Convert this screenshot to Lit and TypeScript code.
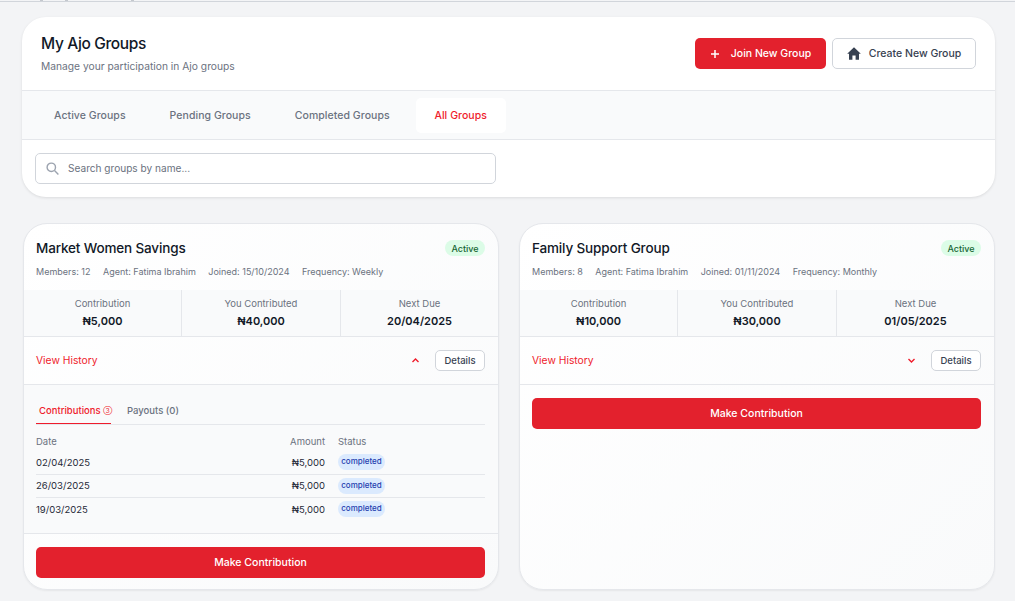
import { LitElement, html, css, nothing } from 'lit';
import { customElement } from 'lit/decorators.js';

interface Group {
  name: string;
  members: number;
  joined: string;
  frequency: string;
  contribution: string;
  contributed: string;
  nextDue: string;
  open: boolean;
}

const groups: Group[] = [
  { name: 'Market Women Savings', members: 12, joined: '15/10/2024', frequency: 'Weekly', contribution: '₦5,000', contributed: '₦40,000', nextDue: '20/04/2025', open: true },
  { name: 'Family Support Group', members: 8, joined: '01/11/2024', frequency: 'Monthly', contribution: '₦10,000', contributed: '₦30,000', nextDue: '01/05/2025', open: false },
];

const history = [
  { date: '02/04/2025', amount: '₦5,000' },
  { date: '26/03/2025', amount: '₦5,000' },
  { date: '19/03/2025', amount: '₦5,000' },
];

@customElement('app-root')
export class AppRoot extends LitElement {
  static styles = css`
    :host {
      display: block;
      height: 601px;
      overflow: hidden;
      background: #f3f4f6;
      font-family: Inter, 'Noto Sans', sans-serif;
      color: #111827;
    }
    /* bottoms of the letters of the page above, scrolled almost out of view */
    .topline {
      height: 1px;
      padding-left: 40px;
      display: flex;
      border-bottom: 1px solid #d1d5db;
    }
    .topline i {
      width: 3px;
      height: 1px;
      background: #c4c8ce;
    }
    .topline i + i {
      margin-left: 22px;
    }
    .topline i + i + i {
      margin-left: 63px;
    }
    .page {
      padding: 15px 20px 0 22px;
    }
    .panel {
      background: #fff;
      border-radius: 24px;
      box-shadow: 0 1px 3px rgba(0, 0, 0, 0.1);
      overflow: hidden;
    }
    .panel-head {
      height: 74px;
      box-sizing: border-box;
      padding: 0 19px 1px;
      display: flex;
      align-items: center;
      justify-content: space-between;
      border-bottom: 1px solid #e5e7eb;
    }
    h1 {
      margin: 0 0 4px;
      font-size: 15.5px;
      line-height: 22px;
      font-weight: 500;
      letter-spacing: -0.35px;
    }
    .sub {
      margin: 0;
      font-size: 10.25px;
      line-height: 14px;
      color: #6b7280;
    }
    .actions {
      display: flex;
      gap: 6px;
      margin-top: 1px;
    }
    .btn {
      height: 31px;
      box-sizing: border-box;
      border-radius: 5px;
      display: flex;
      align-items: center;
      justify-content: center;
      font: inherit;
      font-size: 10.5px;
      font-weight: 500;
    }
    .btn-red {
      width: 131px;
      gap: 11px;
      border: 0;
      background: #e3212d;
      color: #fff;
    }
    .btn-line {
      width: 144px;
      gap: 8px;
      border: 1px solid #d1d5db;
      background: #fff;
      color: #374151;
    }
    .tabs {
      height: 49px;
      box-sizing: border-box;
      padding: 7px 10px 0;
      display: flex;
      background: #f9fafb;
      border-bottom: 1px solid #e5e7eb;
    }
    .tab {
      height: 35px;
      padding: 0 22px;
      display: flex;
      align-items: center;
      border-radius: 5px;
      font-size: 10.5px;
      font-weight: 500;
      letter-spacing: 0.05px;
      color: #6b7280;
    }
    .tab.on {
      width: 90px;
      margin-left: 4px;
      box-sizing: border-box;
      justify-content: center;
      padding: 0;
      background: #fff;
      color: #ef1c2c;
    }
    .search-row {
      height: 57px;
      box-sizing: border-box;
      padding: 13px;
    }
    .search {
      width: 461px;
      height: 31px;
      box-sizing: border-box;
      padding: 0 10px 1px;
      display: flex;
      align-items: center;
      gap: 9px;
      border: 1px solid #d1d5db;
      border-radius: 5px;
      font-size: 10.1px;
      color: #6b7280;
    }
    .cards {
      margin-top: 26px;
      padding: 0 1px;
      display: grid;
      grid-template-columns: 476px 476px;
      gap: 20px;
    }
    .card {
      height: 367px;
      box-sizing: border-box;
      border: 1px solid #e5e7eb;
      border-radius: 24px;
      background: linear-gradient(135deg, #ffffff, #f9fafb);
      box-shadow: 0 1px 2px rgba(0, 0, 0, 0.06);
      overflow: hidden;
    }
    .card-head {
      height: 66px;
      box-sizing: border-box;
      padding: 14px 13px 0 12px;
    }
    .title-row {
      display: flex;
      justify-content: space-between;
      align-items: center;
      height: 20px;
    }
    h2 {
      margin: 0;
      font-size: 13.5px;
      font-weight: 500;
      letter-spacing: -0.15px;
    }
    .badge {
      width: 40px;
      height: 16px;
      border-radius: 8px;
      background: #dcfce7;
      color: #166534;
      font-size: 9px;
      font-weight: 500;
      display: flex;
      align-items: center;
      justify-content: center;
    }
    .meta {
      margin-top: 7px;
      display: flex;
      gap: 12.5px;
      font-size: 9px;
      line-height: 14px;
      color: #6b7280;
    }
    .stats {
      height: 46px;
      display: grid;
      grid-template-columns: 157px 159px 1fr;
      background: #f9fafb;
      border-bottom: 1px solid #e5e7eb;
    }
    .stat {
      text-align: center;
      padding-top: 7px;
      font-size: 9.5px;
      line-height: 14px;
      color: #6b7280;
    }
    .stat + .stat {
      border-left: 1px solid #e5e7eb;
    }
    .stat b {
      display: block;
      margin-top: 2px;
      font-size: 11px;
      line-height: 16px;
      font-weight: 600;
      color: #111827;
    }
    .toggle-row {
      height: 48px;
      box-sizing: border-box;
      padding: 0 13px 0 12px;
      display: flex;
      align-items: center;
      border-bottom: 1px solid #e5e7eb;
    }
    .link {
      flex: 1;
      margin-bottom: 2px;
      font-size: 10.3px;
      color: #ef1c2c;
    }
    .details {
      margin-left: 15px;
      width: 50px;
      height: 21px;
      box-sizing: border-box;
      border: 1px solid #d1d5db;
      border-radius: 5px;
      background: #fff;
      font: inherit;
      font-size: 9.5px;
      font-weight: 500;
      color: #374151;
      padding: 0;
    }
    .chev {
      display: block;
    }
    .history {
      height: 149px;
      box-sizing: border-box;
      padding: 15px 13px 0 12px;
      background: #f9fafb;
      border-bottom: 1px solid #e5e7eb;
    }
    .h-tabs {
      display: flex;
      height: 24px;
      border-bottom: 1px solid #e5e7eb;
      font-size: 9.5px;
      font-weight: 500;
      color: #6b7280;
    }
    .h-tab {
      padding: 4px 3px 0;
      margin-right: 13px;
      line-height: 14px;
    }
    .h-tab.on {
      width: 75px;
      box-sizing: border-box;
      height: 24px;
      color: #ef1c2c;
      border-bottom: 1px solid #ef1c2c;
      white-space: nowrap;
    }
    .count {
      font-size: 6.5px;
      font-weight: 400;
      vertical-align: 1px;
    }
    table {
      width: 100%;
      border-collapse: collapse;
      table-layout: fixed;
      font-size: 9.5px;
    }
    th {
      height: 22px;
      padding: 0 0 4px;
      vertical-align: bottom;
      text-align: left;
      font-weight: 400;
      color: #6b7280;
    }
    td {
      height: 22.5px;
      padding: 0;
      color: #1f2937;
      border-bottom: 1px solid #e5e7eb;
    }
    tr:last-child td {
      border-bottom: 0;
    }
    .col-amt {
      width: 64px;
    }
    .col-st {
      width: 160px;
    }
    .amt {
      text-align: right;
    }
    .st {
      padding-left: 13px;
    }
    .pill {
      display: block;
      width: 47px;
      height: 16px;
      line-height: 15px;
      border-radius: 8px;
      text-align: center;
      background: #dbeafe;
      color: #1e40af;
      font-size: 8px;
      font-weight: 500;
    }
    .card-foot {
      padding: 13px 13px 0 12px;
    }
    .pay {
      width: 100%;
      font-size: 10.5px;
    }
  `;

  private renderHistory() {
    return html`
      <div class="history">
        <div class="h-tabs">
          <div class="h-tab on">Contributions <span class="count">③</span></div>
          <div class="h-tab">Payouts (0)</div>
        </div>
        <table>
          <colgroup><col /><col class="col-amt" /><col class="col-st" /></colgroup>
          <tr><th>Date</th><th class="amt">Amount</th><th class="st">Status</th></tr>
          ${history.map(
            (row) => html`
              <tr>
                <td>${row.date}</td>
                <td class="amt">${row.amount}</td>
                <td class="st"><span class="pill">completed</span></td>
              </tr>
            `
          )}
        </table>
      </div>
    `;
  }

  private renderCard(g: Group) {
    return html`
      <section class="card">
        <div class="card-head">
          <div class="title-row">
            <h2>${g.name}</h2>
            <span class="badge">Active</span>
          </div>
          <div class="meta">
            <span>Members: ${g.members}</span>
            <span>Agent: Fatima Ibrahim</span>
            <span>Joined: ${g.joined}</span>
            <span>Frequency: ${g.frequency}</span>
          </div>
        </div>
        <div class="stats">
          <div class="stat">Contribution<b>${g.contribution}</b></div>
          <div class="stat">You Contributed<b>${g.contributed}</b></div>
          <div class="stat">Next Due<b>${g.nextDue}</b></div>
        </div>
        <div class="toggle-row">
          <span class="link">View History</span>
          <svg class="chev" width="9" height="9" viewBox="0 0 9 9" fill="none" stroke="#ef1c2c" stroke-width="1.4">
            <path d=${g.open ? 'M1.5 6 L4.5 3 L7.5 6' : 'M1.5 3 L4.5 6 L7.5 3'}></path>
          </svg>
          <button class="details">Details</button>
        </div>
        ${g.open ? this.renderHistory() : nothing}
        <div class="card-foot">
          <button class="btn btn-red pay">Make Contribution</button>
        </div>
      </section>
    `;
  }

  render() {
    return html`
      <div class="topline"><i></i><i></i><i></i></div>
      <div class="page">
        <div class="panel">
          <div class="panel-head">
            <div>
              <h1>My Ajo Groups</h1>
              <p class="sub">Manage your participation in Ajo groups</p>
            </div>
            <div class="actions">
              <button class="btn btn-red">
                <svg width="10" height="10" viewBox="0 0 10 10" stroke="#fff" stroke-width="1.5"><path d="M5 1 V9 M1 5 H9"></path></svg>
                Join New Group
              </button>
              <button class="btn btn-line">
                <svg width="14" height="13" viewBox="0 0 14 13" fill="#374151"><path d="M7 0.3 L13.8 6.8 L12 6.8 L12 12.8 L8.6 12.8 L8.6 8.6 L5.4 8.6 L5.4 12.8 L2 12.8 L2 6.8 L0.2 6.8 Z"></path></svg>
                Create New Group
              </button>
            </div>
          </div>
          <div class="tabs">
            <div class="tab">Active Groups</div>
            <div class="tab">Pending Groups</div>
            <div class="tab">Completed Groups</div>
            <div class="tab on">All Groups</div>
          </div>
          <div class="search-row">
            <div class="search">
              <svg width="13" height="13" viewBox="0 0 13 13" fill="none" stroke="#9ca3af" stroke-width="1.4"><circle cx="5.3" cy="5.3" r="4.2"></circle><path d="M8.5 8.5 L12.4 12.4"></path></svg>
              Search groups by name...
            </div>
          </div>
        </div>
        <div class="cards">${groups.map((g) => this.renderCard(g))}</div>
      </div>
    `;
  }
}
